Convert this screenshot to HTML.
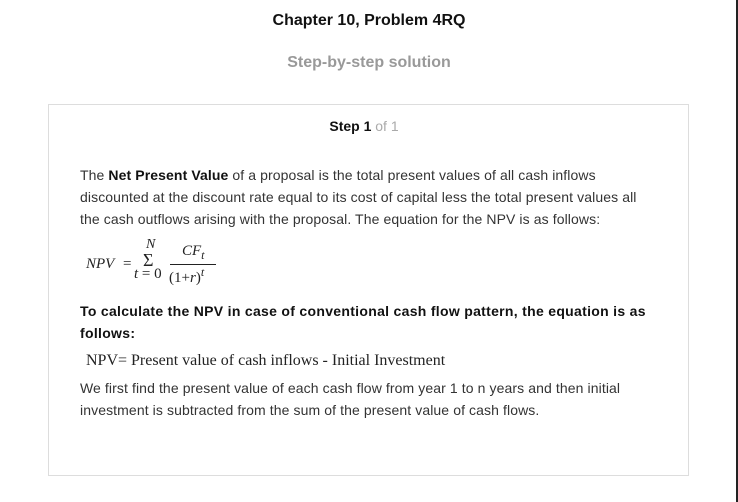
<!DOCTYPE html>
<html><head><meta charset="utf-8"><style>
body{margin:0;width:738px;height:502px;background:#fff;font-family:"Liberation Sans",Arial,sans-serif;position:relative;overflow:hidden;color:#222}
.a{position:absolute;white-space:nowrap}
.t{font-size:14px;letter-spacing:0.1px;color:#333}
.s{font-family:"Liberation Serif",serif;font-style:italic;color:#222}
</style></head><body>
<div class="a" style="left:0;width:738px;top:12px;text-align:center;font-size:16px;font-weight:bold;color:#111">Chapter 10, Problem 4RQ</div>
<div class="a" style="left:0;width:738px;top:54px;text-align:center;font-size:16px;font-weight:bold;color:#999">Step-by-step solution</div>
<div class="a" style="left:48px;top:104px;width:639px;height:370px;border:1px solid #ddd"></div>
<div class="a" style="left:736px;top:0;width:2px;height:502px;background:#222"></div>
<div class="a" style="left:0;width:728px;top:118px;text-align:center;font-size:14px"><b style="color:#111">Step 1</b> <span style="color:#aaa">of 1</span></div>
<div class="a t" style="left:80px;top:164px;line-height:22px">The <b style="color:#111">Net Present Value</b> of a proposal is the total present values of all cash inflows<br>discounted at the discount rate equal to its cost of capital less the total present values all<br>the cash outflows arising with the proposal. The equation for the NPV is as follows:</div>
<div class="a s" style="left:86px;top:256px;font-size:15px">NPV</div>
<div class="a" style="left:123px;top:256px;font-size:15px;font-family:'Liberation Serif',serif">=</div>
<div class="a s" style="left:146px;top:237px;font-size:14px">N</div>
<div class="a" style="left:143px;top:250px;font-size:18px;font-family:'Liberation Serif',serif">Σ</div>
<div class="a" style="left:134px;top:266px;font-size:15px;font-family:'Liberation Serif',serif"><i>t</i> = 0</div>
<div class="a s" style="left:182px;top:243px;font-size:15px">CF<sub style="font-size:12px">t</sub></div>
<div class="a" style="left:170px;top:264px;width:46px;height:1px;background:#222"></div>
<div class="a" style="left:169px;top:265px;font-size:15px;font-family:'Liberation Serif',serif">(1+<i>r</i>)<sup style="font-size:12px"><i>t</i></sup></div>
<div class="a" style="left:80px;top:300px;line-height:22px;font-size:14px;letter-spacing:0.3px;font-weight:bold;color:#111">To calculate the NPV in case of conventional cash flow pattern, the equation is as<br>follows:</div>
<div class="a" style="left:86px;top:352px;font-size:16px;font-family:'Liberation Serif',serif;color:#222">NPV= Present value of cash inflows - Initial Investment</div>
<div class="a t" style="left:80px;top:377px;line-height:22px">We first find the present value of each cash flow from year 1 to n years and then initial<br>investment is subtracted from the sum of the present value of cash flows.</div>
</body></html>
